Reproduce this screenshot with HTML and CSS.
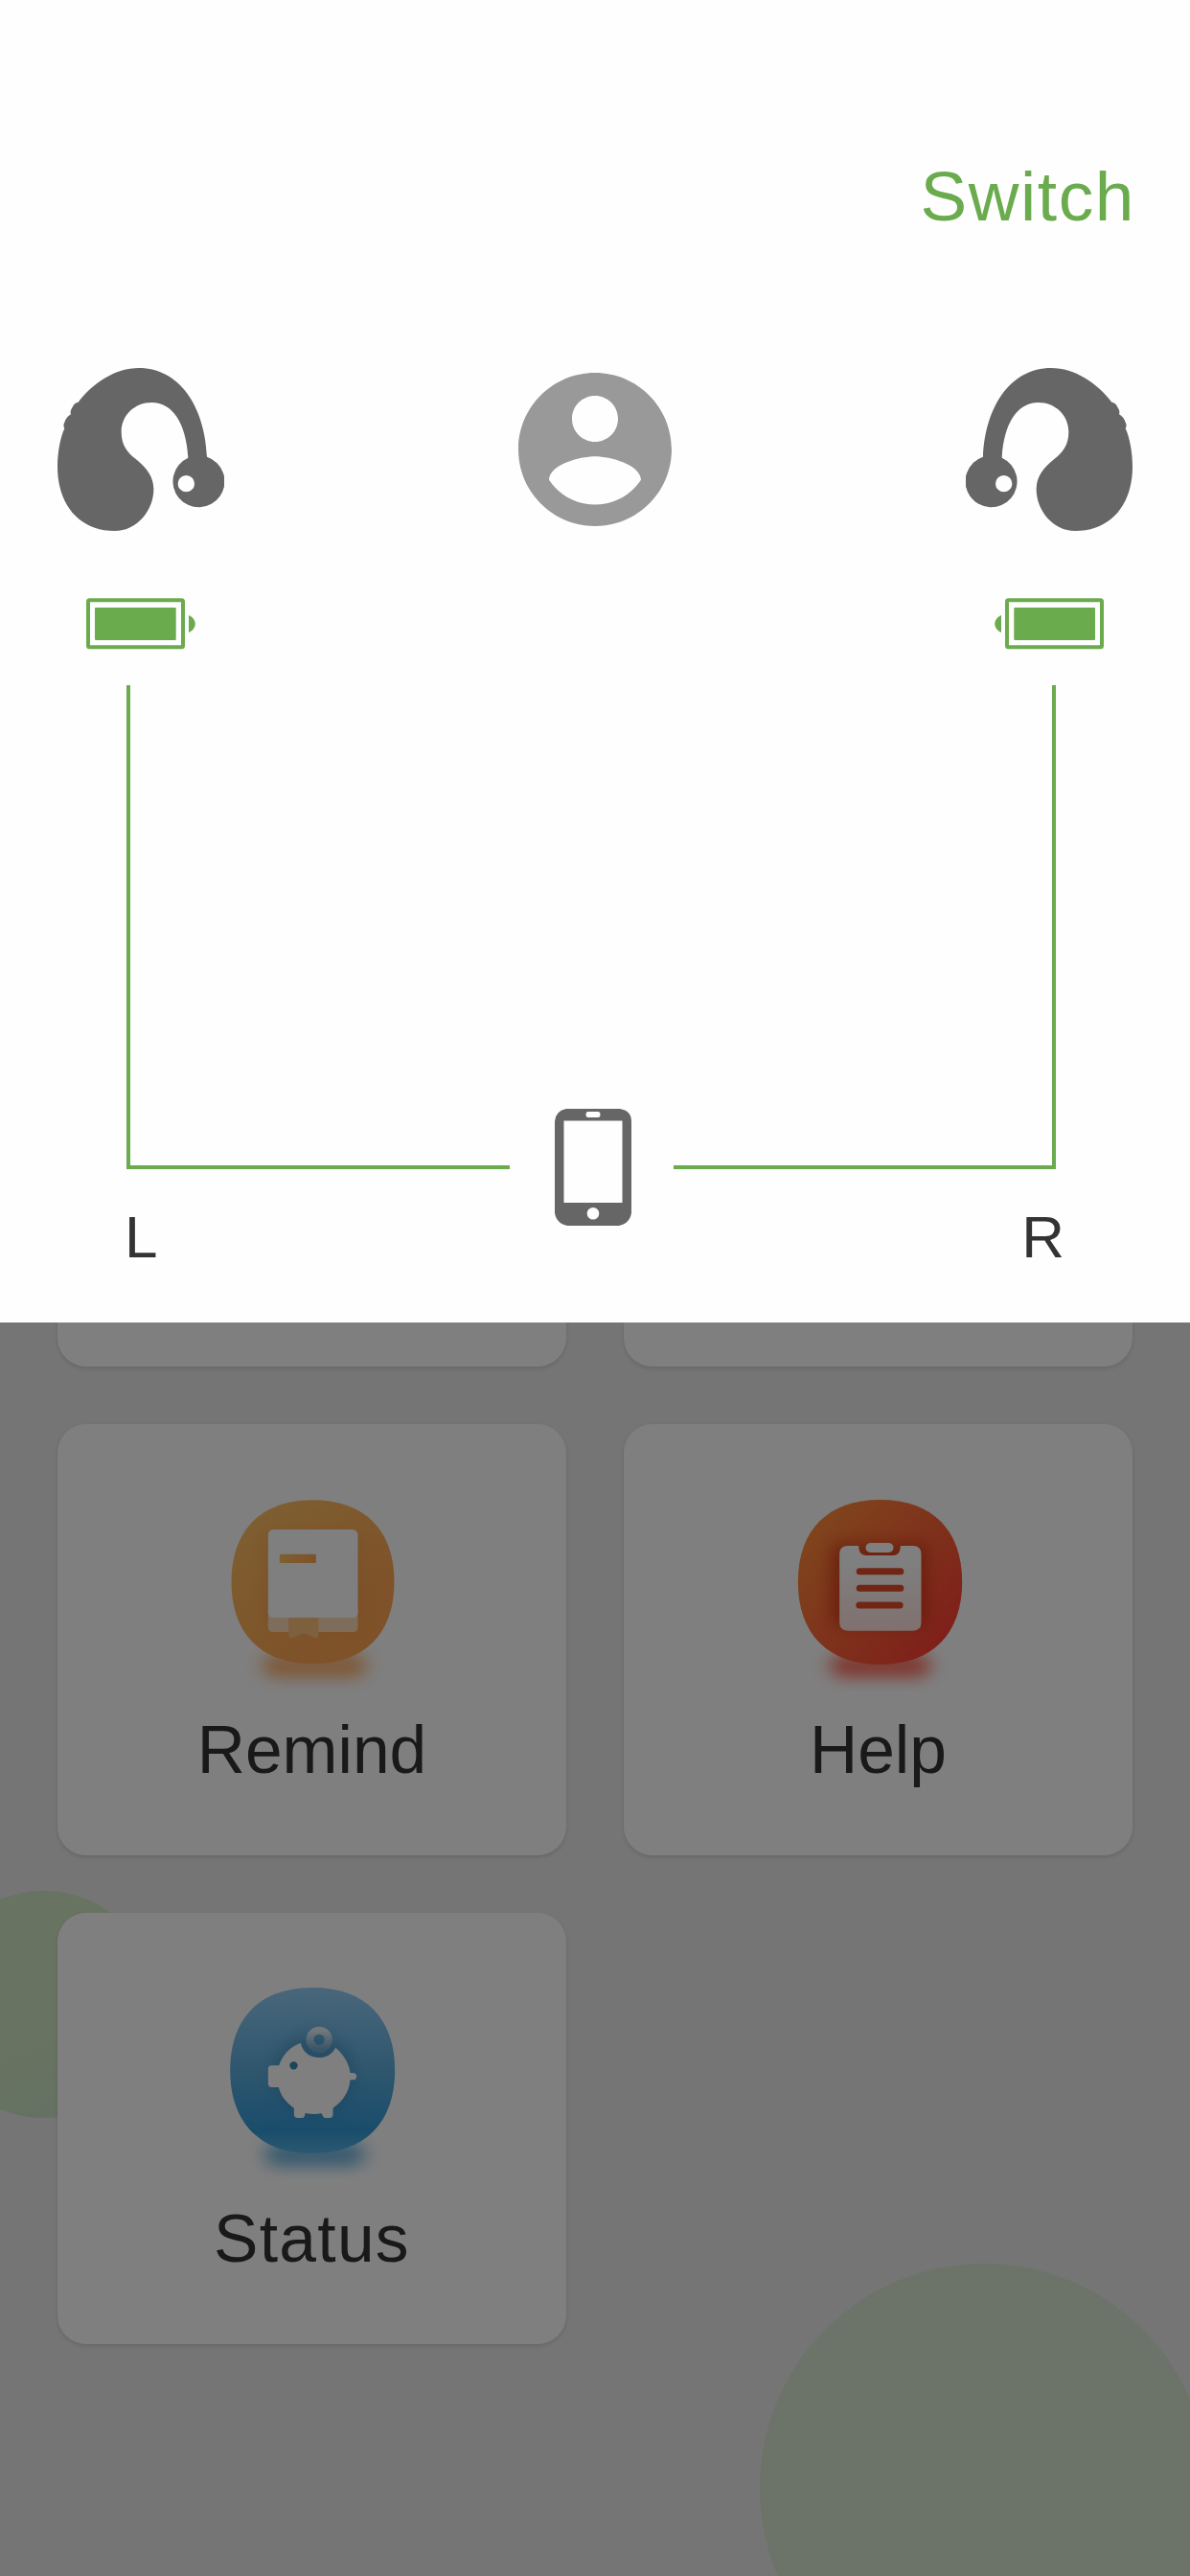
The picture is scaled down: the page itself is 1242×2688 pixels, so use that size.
FILE: index.html
```html
<!DOCTYPE html>
<html lang="en">
<head>
<meta charset="utf-8">
<title>Devices</title>
<link rel="stylesheet" href="styles.css">
</head>
<body>
<main class="home">
  <div class="bubble bubble-left"></div>
  <div class="bubble bubble-right"></div>
  <div class="cards">
    <div class="card"></div>
    <div class="card"></div>
    <div class="card">
      <svg class="card-icon" viewBox="-13.5 0 840 750">
        <defs>
          <linearGradient id="amber" x1="0.05" y1="0.05" x2="0.8" y2="1"><stop offset="0" stop-color="#fcc064"/><stop offset="0.8" stop-color="#fea452"/></linearGradient>
          <filter id="soft" x="-40%" y="-150%" width="180%" height="400%" color-interpolation-filters="sRGB"><feGaussianBlur stdDeviation="28 24"/></filter>
          <filter id="halo" x="-40%" y="-40%" width="180%" height="180%" color-interpolation-filters="sRGB"><feGaussianBlur stdDeviation="24"/></filter>
          <linearGradient id="bar" x1="0" x2="1"><stop offset="0" stop-color="#fac062"/><stop offset="1" stop-color="#fea452"/></linearGradient>
        </defs>
        <rect x="250" y="585" width="326" height="78" rx="39" fill="#ff8b2b" opacity=".65" filter="url(#soft)"/>
        <path d="M408 106C570 106 663 200 663 362S570 618 408 618S153 524 153 362S246 106 408 106Z" fill="url(#amber)"/>
        <rect x="255" y="205" width="306" height="285" rx="20" fill="#e88c3c" opacity=".3" filter="url(#halo)"/>
        <path d="M268 450H549V503Q549 519 533 519H284Q268 519 268 503Z" fill="#fde0bf" opacity=".9"/>
        <path d="M332 470H426V528Q426 540 414 537L379 522L345 537Q332 541 332 526Z" fill="#fbc27c"/>
        <rect x="268" y="198" width="281" height="276" rx="16" fill="#fff"/>
        <rect x="304" y="275" width="114" height="28" rx="3" fill="url(#bar)"/>
      </svg>
      <span class="card-label">Remind</span>
    </div>
    <div class="card">
      <svg class="card-icon" viewBox="-10.5 0 840 750">
        <defs>
          <linearGradient id="red" x1="0.1" y1="0.15" x2="0.9" y2="0.85"><stop offset="0" stop-color="#ff8a3a"/><stop offset="0.55" stop-color="#fd6138"/><stop offset="1" stop-color="#ff4034"/></linearGradient>
          <linearGradient id="sheet" x1="0" y1="0" x2="0" y2="1"><stop offset="0.2" stop-color="#fff"/><stop offset="1" stop-color="#ffe2de"/></linearGradient>
        </defs>
        <rect x="258" y="586" width="314" height="76" rx="38" fill="#ff3d28" opacity=".72" filter="url(#soft)"/>
        <path d="M414 105C578 105 671 200 671 362S578 620 414 620S157 524 157 362S250 105 414 105Z" fill="url(#red)"/>
        <rect x="258" y="240" width="304" height="260" rx="26" fill="#bc2708" opacity=".55" filter="url(#halo)"/>
        <path d="M313 249H347C347 269 356 279 370 279H456C470 279 478 269 478 249H517Q543 249 543 275V489Q543 515 517 515H313Q287 515 287 489V275Q287 249 313 249Z" fill="url(#sheet)"/>
        <rect x="369" y="240" width="87" height="30" rx="15" fill="#fff"/>
        <path d="M350 329H478M350 382H478M349 435H476" stroke="#e24a29" stroke-width="21" stroke-linecap="round"/>
      </svg>
      <span class="card-label">Help</span>
    </div>
    <div class="card">
      <svg class="card-icon" viewBox="-13.5 0 840 750">
        <defs>
          <linearGradient id="blue" x1="0" y1="0" x2="0" y2="1"><stop offset="0" stop-color="#92cef6"/><stop offset="0.5" stop-color="#5eaddc"/><stop offset="0.86" stop-color="#349ad8"/><stop offset="1" stop-color="#56b2e4"/></linearGradient>
          <linearGradient id="coin" x1="0" y1="0" x2="0" y2="1"><stop offset="0" stop-color="#e8f1f6"/><stop offset="1" stop-color="#70acd0"/></linearGradient>
        </defs>
        <rect x="258" y="585" width="312" height="78" rx="39" fill="#2a92cf" opacity=".66" filter="url(#soft)"/>
        <path d="M407 102C572 102 665 198 665 361S572 621 407 621S149 524 149 361S242 102 407 102Z" fill="url(#blue)"/>
        <circle cx="410" cy="372" r="128" fill="#14699c" opacity=".3" filter="url(#halo)"/>
        <path d="M370 275C376 304 398 321 428 321C452 321 470 309 479 290C505 312 522 340 525 369H535Q545 371 545 380Q545 390 535 391H525C522 427 503 458 471 479V499Q471 510 460 510H448Q439 510 436 496Q410 500 384 495Q384 510 373 510H360Q349 510 349 499V479C325 463 308 441 301 414H279Q268 414 268 403V357Q268 346 279 346H302C313 312 337 287 370 275Z" fill="#fff"/>
        <circle cx="348" cy="346" r="12.500" fill="#3c88b5"/>
        <circle cx="428" cy="265" r="29" fill="none" stroke="url(#coin)" stroke-width="24"/>
      </svg>
      <span class="card-label card-label-wide">Status</span>
    </div>
  </div>
</main>

<div class="scrim">
  <section class="panel">
    <header class="panel-head"><a class="switch">Switch</a></header>
    <div class="row devices">
      <svg class="aid" viewBox="60 72 522 510"><path id="aid-shape" fill="#666" fill-rule="evenodd" d="M315 72C440 72 521 190 528 350A81 81 0 1 1 469 353C463 245 420 180 355 180C302 180 260 220 260 272C260 315 280 337 306 358C341 387 361 413 361 452C361 516 310 582 239 582C128 582 60 500 60 380C60 338 68 292 82 261Q76 252 83 240Q88 225 102 217Q98 207 107 194Q113 180 125 179C170 120 240 72 315 72ZM463 408A26 26 0 1 0 463 460A26 26 0 1 0 463 408Z"/></svg>
      <svg class="user" viewBox="2 2 20 20"><path fill="#999" d="M12 2C6.480 2 2 6.480 2 12s4.480 10 10 10 10-4.480 10-10S17.520 2 12 2zm0 3c1.660 0 3 1.340 3 3s-1.340 3-3 3-3-1.340-3-3 1.340-3 3-3zm0 14.200c-2.500 0-4.710-1.280-6-3.220.03-1.990 4-3.080 6-3.080 1.990 0 5.970 1.090 6 3.080-1.290 1.940-3.500 3.220-6 3.220z"/></svg>
      <svg class="aid flip" viewBox="60 72 522 510"><use href="#aid-shape"/></svg>
    </div>
    <div class="row batteries">
      <svg class="battery" viewBox="0 0 114 54"><rect x="2" y="2.300" width="99" height="49" rx="1.500" fill="none" stroke="#6aab4d" stroke-width="4"/><rect x="9" y="10" width="84.700" height="34" rx="1" fill="#6aab4d"/><path d="M107 18C116 22 116 32 107 36Z" fill="#6aab4d"/></svg>
      <svg class="battery flip" viewBox="0 0 114 54"><rect x="2" y="2.300" width="99" height="49" rx="1.500" fill="none" stroke="#6aab4d" stroke-width="4"/><rect x="9" y="10" width="84.700" height="34" rx="1" fill="#6aab4d"/><path d="M107 18C116 22 116 32 107 36Z" fill="#6aab4d"/></svg>
    </div>
    <div class="links">
      <div class="link link-left"></div>
      <svg class="phone" viewBox="0 0 80 122"><path fill="#666" fill-rule="evenodd" d="M12 0H68Q80 2 80 13V109Q78 120 67 122H13Q2 120 0 109V13Q1 2 12 0ZM9.500 12.500V98H70.500V12.500ZM35 3Q32.500 3 32.500 6T35 9H45Q47.500 9 47.500 6T45 3ZM40 103A6.300 6.300 0 1 0 40 115.600A6.300 6.300 0 1 0 40 103Z"/></svg>
      <div class="link link-right"></div>
    </div>
    <div class="row sides"><span>L</span><span>R</span></div>
  </section>
</div>
</body>
</html>
```

FILE: styles.css
```css
* { box-sizing: border-box; }

body {
  margin: 0;
  font-family: "Liberation Sans", Arial, sans-serif;
  color: #333;
}

svg { display: block; }

.home {
  position: relative;
  width: 1242px;
  height: 2688px;
  overflow: hidden;
  background: #eaeaea;
}

.bubble {
  position: absolute;
  border-radius: 50%;
}

.bubble-left {
  left: -73px;
  top: 1973px;
  width: 237px;
  height: 237px;
  background: linear-gradient(160deg, #d0e6c2 60%, #c8e2c6);
}

.bubble-right {
  left: 793px;
  top: 2362px;
  width: 468px;
  height: 468px;
  background: #d9e6d1;
}

.cards {
  position: relative;
  display: grid;
  grid-template-columns: 1fr 1fr;
  grid-auto-rows: 450px;
  gap: 60px;
  padding: 976px 60px 0;
}

.card {
  display: flex;
  flex-direction: column;
  align-items: center;
  padding-top: 44px;
  border-radius: 30px;
  background: #fff;
  box-shadow: 0 2px 4px rgba(0, 0, 0, .12);
}

.card-icon {
  width: 280px;
  height: 250px;
}

.card-label {
  font-size: 69.5px;
  line-height: 80px;
  margin-top: 6px;
}

.card-label-wide { letter-spacing: 1.3px; }

.scrim {
  position: absolute;
  inset: 0 0 auto 0;
  width: 1242px;
  height: 2688px;
  background: rgba(0, 0, 0, .5);
}

.panel {
  height: 1380px;
  padding-top: 165px;
  background: #fefefe;
}

.panel-head {
  display: flex;
  justify-content: flex-end;
  padding-right: 57px;
}

.switch {
  font-size: 73px;
  line-height: 80px;
  letter-spacing: 1.6px;
  color: #6aab4d;
}

.row {
  display: flex;
  justify-content: space-between;
  align-items: center;
}

.devices {
  margin-top: 139px;
  padding: 0 60px;
}

.aid {
  width: 174px;
  height: 170px;
}

.user {
  width: 160px;
  height: 160px;
}

.flip { transform: scaleX(-1); }

.batteries {
  margin-top: 70px;
  padding: 0 90px;
}

.battery {
  width: 114px;
  height: 54px;
}

.links {
  display: flex;
  height: 505px;
  margin-top: 37px;
  padding: 0 140px 0 132px;
}

.link {
  flex: 1;
  border: 0 solid #6aab4d;
  border-bottom-width: 4px;
}

.link-left { border-left-width: 4px; }
.link-right { border-right-width: 4px; }

.phone {
  width: 80px;
  height: 122px;
  margin: 442px 44px 0 47px;
}

.sides {
  margin-top: 51px;
  padding: 0 131px 0 130px;
  font-size: 62px;
  line-height: 40px;
}
```
